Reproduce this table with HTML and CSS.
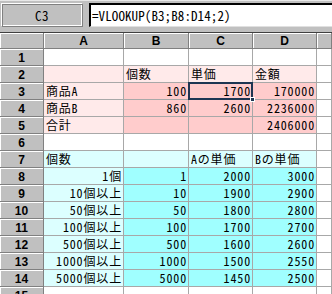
FILE: index.html
```html
<!DOCTYPE html>
<html lang="ja">
<head>
<meta charset="utf-8">
<title>Sheet1</title>
<link rel="stylesheet" href="styles.css">
</head>
<body>
<div class="app">
  <div class="fbar">
    <div class="namebox">C3</div>
    <div class="formula">=VLOOKUP(B3;B8:D14;2)</div>
  </div>
  <div class="sheet">
    <div class="hd corner"></div><div class="hd">A</div><div class="hd">B</div><div class="hd">C</div><div class="hd">D</div><div class="hd"></div>

    <div class="hd rh">1</div><div class="c"></div><div class="c"></div><div class="c"></div><div class="c"></div><div class="c"></div>

    <div class="hd rh">2</div><div class="c lp"></div><div class="c lp">個数</div><div class="c lp">単価</div><div class="c lp">金額</div><div class="c"></div>

    <div class="hd rh">3</div><div class="c lp">商品A</div><div class="c pk n">100</div><div class="c pk n sel">1700</div><div class="c pk n">170000</div><div class="c"></div>

    <div class="hd rh">4</div><div class="c lp">商品B</div><div class="c pk n">860</div><div class="c pk n">2600</div><div class="c pk n">2236000</div><div class="c"></div>

    <div class="hd rh">5</div><div class="c lp">合計</div><div class="c pk"></div><div class="c pk"></div><div class="c pk n">2406000</div><div class="c"></div>

    <div class="hd rh">6</div><div class="c"></div><div class="c"></div><div class="c"></div><div class="c"></div><div class="c"></div>

    <div class="hd rh">7</div><div class="c lc">個数</div><div class="c lc"></div><div class="c lc">Aの単価</div><div class="c lc">Bの単価</div><div class="c"></div>

    <div class="hd rh">8</div><div class="c lc n">1個</div><div class="c cy n">1</div><div class="c cy n">2000</div><div class="c cy n">3000</div><div class="c"></div>

    <div class="hd rh">9</div><div class="c lc n">10個以上</div><div class="c cy n">10</div><div class="c cy n">1900</div><div class="c cy n">2900</div><div class="c"></div>

    <div class="hd rh">10</div><div class="c lc n">50個以上</div><div class="c cy n">50</div><div class="c cy n">1800</div><div class="c cy n">2800</div><div class="c"></div>

    <div class="hd rh">11</div><div class="c lc n">100個以上</div><div class="c cy n">100</div><div class="c cy n">1700</div><div class="c cy n">2700</div><div class="c"></div>

    <div class="hd rh">12</div><div class="c lc n">500個以上</div><div class="c cy n">500</div><div class="c cy n">1600</div><div class="c cy n">2600</div><div class="c"></div>

    <div class="hd rh">13</div><div class="c lc n">1000個以上</div><div class="c cy n">1000</div><div class="c cy n">1500</div><div class="c cy n">2550</div><div class="c"></div>

    <div class="hd rh">14</div><div class="c lc n">5000個以上</div><div class="c cy n">5000</div><div class="c cy n">1450</div><div class="c cy n">2500</div><div class="c"></div>

    <div class="hd rh">15</div><div class="c"></div><div class="c"></div><div class="c"></div><div class="c"></div><div class="c"></div>
  </div>
</div>
</body>
</html>
```

FILE: styles.css
```css
html, body {
  margin: 0;
  padding: 0;
  background: #c0c0c0;
}

.app {
  width: 332px;
  height: 294px;
  overflow: hidden;
  font-family: "Noto Sans CJK JP", sans-serif;
  font-feature-settings: "hwid" 1;
  font-size: 12px;
  color: #000;
}

/* formula bar */
.fbar {
  height: 29px;
  display: flex;
  align-items: flex-start;
  gap: 6px;
  padding: 2px 0 0 1px;
  background: #c0c0c0;
  border-top: 1px solid #e8e8e8;
  border-bottom: 1px solid #404040;
  box-sizing: content-box;
}

.namebox {
  width: 82px;
  height: 24px;
  box-sizing: border-box;
  border: 1px solid;
  border-color: #ffffff #808080 #808080 #ffffff;
  box-shadow: inset 1px 1px 0 #808080, inset -1px -1px 0 #ffffff;
  display: flex;
  align-items: center;
  justify-content: center;
  font-size: 13px;
  letter-spacing: 0.5px;
}

.formula {
  flex: 1;
  height: 24px;
  box-sizing: border-box;
  background: #fff;
  border-top: 2px solid #000;
  border-left: 2px solid #000;
  border-bottom: 1px solid #e0e0e0;
  padding-left: 1px;
  display: flex;
  align-items: center;
  font-size: 13px;
  letter-spacing: 0.1px;
}

/* worksheet grid */
.sheet {
  display: grid;
  grid-template-columns: 44px 80px 65px 64px 64px 15px;
  grid-template-rows: 16px repeat(15, 17px);
}

.hd {
  box-sizing: border-box;
  background: #c0c0c0;
  border-right: 1px solid #808080;
  border-bottom: 1px solid #808080;
  box-shadow: inset 1px 1px 0 #ffffff;
  font-family: "Liberation Sans", Arial, sans-serif;
  font-weight: bold;
  font-size: 12px;
  display: flex;
  align-items: center;
  justify-content: center;
  line-height: 12px;
}

.rh {
  padding-top: 1px;
}

.c {
  box-sizing: border-box;
  background: #fff;
  border-right: 1px solid #a8a8a8;
  border-bottom: 1px solid #a8a8a8;
  display: flex;
  align-items: flex-end;
  padding: 0 1px 1px 2px;
  white-space: nowrap;
  letter-spacing: 0.8px;
  line-height: 14px;
}

.n {
  justify-content: flex-end;
  padding-right: 1px;
  letter-spacing: 0.85px;
}

.lp { background: #ffeaea; }
.pk { background: #ffcccc; }
.lc { background: #dcffff; }
.cy { background: #a0ffff; }

/* active cell frame with fill handle */
.sel {
  position: relative;
}

.sel::after {
  content: "";
  position: absolute;
  left: -1px;
  top: -1px;
  right: -1px;
  bottom: -1px;
  border: 2px solid #1e3552;
}

.sel::before {
  content: "";
  position: absolute;
  right: -3px;
  bottom: -3px;
  width: 5px;
  height: 5px;
  background: #1e3552;
  border: 1px solid #fff;
  box-sizing: border-box;
  z-index: 1;
}
```
